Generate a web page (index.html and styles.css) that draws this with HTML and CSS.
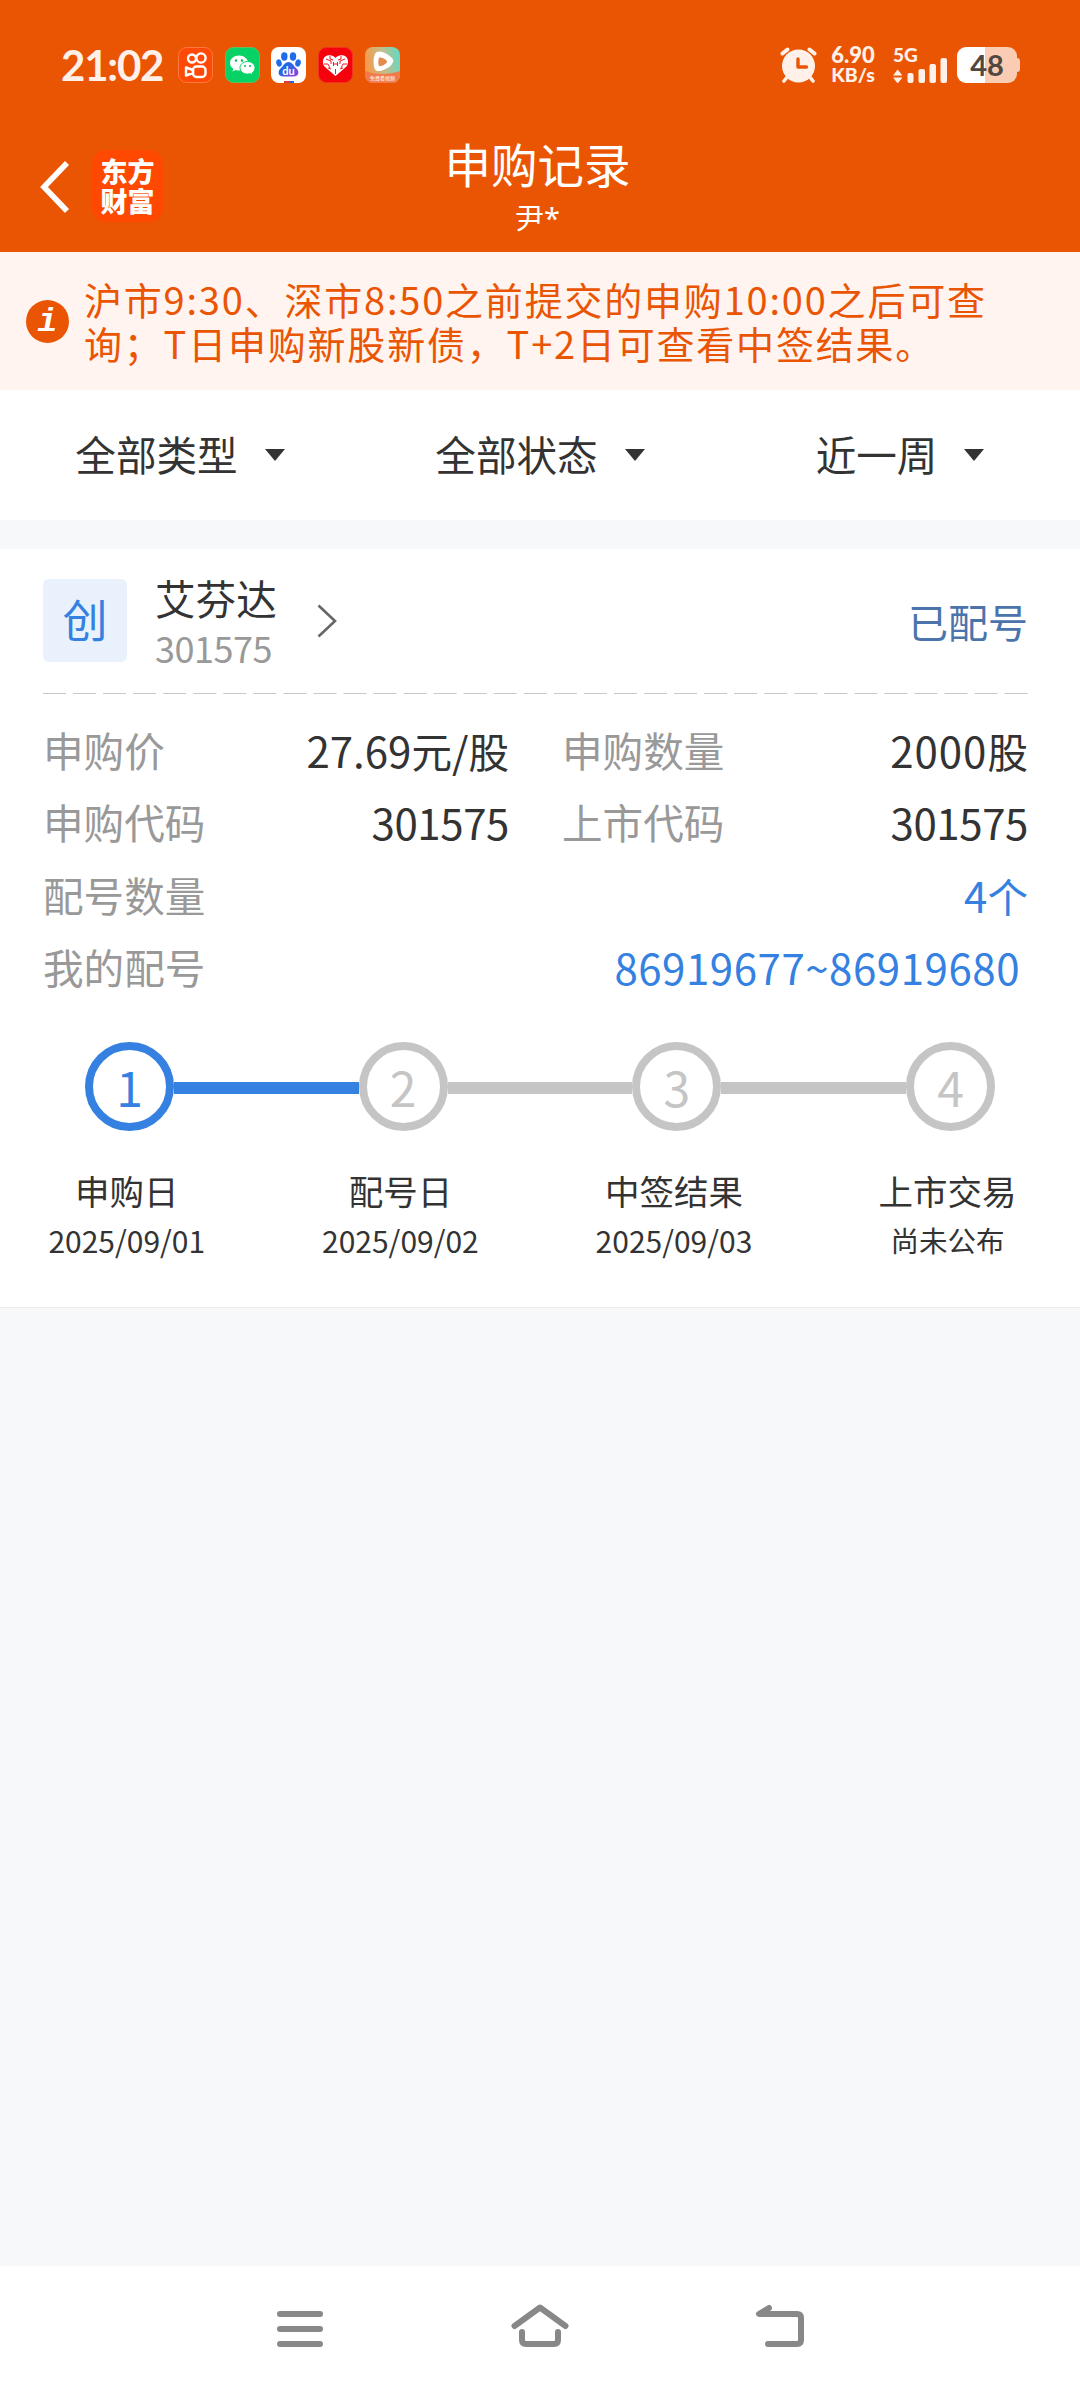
FILE: index.html
```html
<!DOCTYPE html>
<html lang="zh-CN">
<head>
    <meta charset="UTF-8">
    <meta name="viewport" content="width=device-width, initial-scale=1.0">
    <title>申购记录</title>
    <link rel="stylesheet" href="styles.css">
</head>
<body>
    <header class="header">
        <div class="status-bar">
            <span class="time">21:02</span>
            <div class="app-icons">
                <svg class="app-icon" viewBox="0 0 35 36">
                    <rect x=".5" y=".5" width="34" height="35" rx="8" fill="#ff4906" stroke="#ff7a3d"/>
                    <g fill="none" stroke="#fff" stroke-width="2.4">
                        <circle cx="14" cy="11.5" r="4"/>
                        <circle cx="23" cy="11" r="4.6"/>
                        <rect x="15" y="19.5" width="12.5" height="10.5" rx="3.5"/>
                        <path d="M15 23l-7-2.500v8l7-2.500z" stroke-linejoin="round"/>
                    </g>
                </svg>
                <svg class="app-icon" viewBox="0 0 35 36">
                    <rect x=".5" y=".5" width="34" height="35" rx="8" fill="#07d265" stroke="#5fc05c"/>
                    <path d="M14 8.500c-5 0-9 3.300-9 7.500 0 2.400 1.300 4.500 3.300 5.800l-.8 2.700 3.100-1.600c1 .4 2.200.6 3.400.6 5 0 9-3.300 9-7.500s-4-7.500-9-7.500z" fill="#fff"/>
                    <path d="M22.500 14.500c-4.200 0-7.500 2.800-7.500 6.300s3.300 6.300 7.500 6.300c1 0 2-.2 2.800-.5l2.700 1.500-.7-2.400c1.700-1.100 2.700-2.900 2.700-4.900 0-3.500-3.300-6.300-7.500-6.300z" fill="#fff" stroke="#07d265"/>
                    <g fill="#07b85a">
                        <circle cx="11" cy="13.500" r="1.200"/>
                        <circle cx="17" cy="13.500" r="1.200"/>
                        <circle cx="20" cy="19" r="1"/>
                        <circle cx="25" cy="19" r="1"/>
                    </g>
                </svg>
                <svg class="app-icon" viewBox="0 0 35 36">
                    <rect width="35" height="36" rx="8" fill="#fff"/>
                    <defs>
                        <linearGradient id="paw" x1="0" y1="0" x2="1" y2="1">
                            <stop offset=".4" stop-color="#2468e8"/>
                            <stop offset="1" stop-color="#a33be0"/>
                        </linearGradient>
                    </defs>
                    <g fill="#1f6cea">
                        <ellipse cx="13.300" cy="9.500" rx="3.200" ry="4.200"/>
                        <ellipse cx="22" cy="9.500" rx="3.200" ry="4.200"/>
                        <ellipse cx="8" cy="16" rx="2.700" ry="3.700" transform="rotate(-15 8 16)"/>
                        <ellipse cx="27" cy="16" rx="2.700" ry="3.700" transform="rotate(15 27 16)"/>
                    </g>
                    <path d="M17.500 15c-4 0-5 4-8 6.500-3.500 3.500-2 8 3 8h10c5 0 6.500-4.500 3-8-3-2.500-4-6.500-8-6.500z" fill="url(#paw)"/>
                    <text class="paw-text" x="17.500" y="28" text-anchor="middle">du</text>
                    <path d="M13 34h5v2h-5z" fill="#e23b3b"/>
                    <path d="M18 34h5v2h-5z" fill="#2468e8"/>
                </svg>
                <svg class="app-icon" viewBox="0 0 35 36">
                    <rect x=".5" y=".5" width="34" height="35" rx="8" fill="#f5000c" stroke="#f43022"/>
                    <path d="M17.500 29L6.500 19.500c-3-4-1.500-10 3-11 3-.8 6 0 8 2.500 2-2.500 5-3.300 8-2.500 4.500 1 6 7 3 11z" fill="#fff"/>
                    <path d="M8 12l5 2v3M12 9v3l3 1M27 12l-5 2v3M23 9v3l-3 1M6 17h4l2 4M29 17h-4l-2 4M15.500 17h4M15.500 15v4M19.500 15v4M17.500 22v5M10 21l3 1M25 21l-3 1" fill="none" stroke="#f5000c" stroke-width=".9"/>
                </svg>
                <svg class="app-icon" viewBox="0 0 35 36">
                    <defs>
                        <linearGradient id="video" x1="0" y1=".3" x2="1" y2=".1">
                            <stop offset="0" stop-color="#f79a4c"/>
                            <stop offset=".5" stop-color="#c2bd8d"/>
                            <stop offset="1" stop-color="#5bdcc8"/>
                        </linearGradient>
                    </defs>
                    <rect width="35" height="36" rx="8" fill="url(#video)"/>
                    <path d="M0 24c10 4 24 4 35 0v4a8 8 0 0 1-8 8H8a8 8 0 0 1-8-8z" fill="#f27a4a"/>
                    <path d="M10 7c2-4 7-2.500 10-1s7 4.500 8 6.500-1 5.500-4 7.500-10 5.500-13 3.500-3-13-1-16.500z" fill="#fff"/>
                    <path d="M14 11c1-1.500 7.500 1.500 8 3.500s-6.500 5.500-7.800 4.500-1-6.500-.2-8z" fill="#e38b4e"/>
                    <text class="video-text" x="17.500" y="33" text-anchor="middle">免费看视频</text>
                </svg>
            </div>
            <div class="status-right">
                <svg class="alarm" viewBox="0 0 37 36">
                    <g stroke="#fff1ea" stroke-linecap="round">
                        <path d="M2.500 6.500l5-4M34.500 6.500l-5-4" stroke-width="4"/>
                        <path d="M8 29l-4 5M29 29l4 5" stroke-width="3.600"/>
                    </g>
                    <circle cx="18.500" cy="19" r="16.500" fill="#fff1ea"/>
                    <path d="M18 12v8h8.500" fill="none" stroke="#ea5504" stroke-width="3.400" stroke-linecap="round" stroke-linejoin="round"/>
                </svg>
                <div class="speed">
                    <span class="rate">6.90</span>
                    <span>KB/s</span>
                </div>
                <div class="signal">
                    <span class="network">5G</span>
                    <svg class="bars" viewBox="0 0 55 26">
                        <g fill="#fff1ea">
                            <path d="M0 18.500l4.700-6 4.700 6zM0 20.500l4.700 6 4.700-6z"/>
                            <rect x="14.500" y="16" width="6" height="10" rx="2"/>
                            <rect x="25.500" y="12" width="6.500" height="14" rx="2"/>
                            <rect x="36.500" y="7" width="6.500" height="19" rx="2"/>
                            <rect x="47.500" y="1" width="6.500" height="25" rx="2"/>
                        </g>
                    </svg>
                </div>
                <div class="battery">48</div>
            </div>
        </div>
        <div class="nav-bar">
            <svg class="back" viewBox="0 0 30 54">
                <path d="M27 3L4 27l23 24" fill="none" stroke="#fff" stroke-width="5.600"/>
            </svg>
            <div class="logo">东方<br>财富</div>
            <div class="heading">
                <h1 class="title">申购记录</h1>
                <p class="user">尹<span class="mask">*</span></p>
            </div>
        </div>
    </header>

    <section class="notice">
        <span class="info">i</span>
        <p class="notice-text">沪市9:30、深市8:50之前提交的申购10:00之后可查<br>询；T日申购新股新债，T+2日可查看中签结果。</p>
    </section>

    <nav class="filters">
        <div class="filter">全部类型<i class="caret"></i></div>
        <div class="filter">全部状态<i class="caret"></i></div>
        <div class="filter">近一周<i class="caret"></i></div>
    </nav>

    <main class="card">
        <div class="card-head">
            <span class="board">创</span>
            <div class="stock">
                <span class="stock-name">艾芬达</span>
                <span class="stock-code">301575</span>
            </div>
            <svg class="arrow" viewBox="0 0 20 34">
                <path d="M1.500 1.500L18 17 1.500 32.500" fill="none" stroke="#666" stroke-width="2.600"/>
            </svg>
            <span class="status">已配号</span>
        </div>
        <svg class="divider" viewBox="0 0 985 1">
            <path d="M0 .5h985" stroke="#c8c8c8" stroke-dasharray="23 7.050"/>
        </svg>
        <div class="details">
            <div class="item">
                <span class="label">申购价</span>
                <span class="value"><b>27.69</b>元<b>/</b>股</span>
            </div>
            <div class="item">
                <span class="label">申购数量</span>
                <span class="value"><b class="amount">2000</b>股</span>
            </div>
            <div class="item">
                <span class="label">申购代码</span>
                <span class="value"><b class="code">301575</b></span>
            </div>
            <div class="item">
                <span class="label">上市代码</span>
                <span class="value"><b class="code">301575</b></span>
            </div>
            <div class="item wide">
                <span class="label">配号数量</span>
                <span class="value blue"><b>4</b>个</span>
            </div>
            <div class="item wide">
                <span class="label">我的配号</span>
                <span class="value blue lots"><b>86919677~86919680</b></span>
            </div>
        </div>
        <div class="track">
            <span class="dot active">1</span>
            <span class="line active"></span>
            <span class="dot">2</span>
            <span class="line"></span>
            <span class="dot">3</span>
            <span class="line"></span>
            <span class="dot">4</span>
        </div>
        <div class="steps">
            <div class="step"><span class="step-name">申购日</span><span class="step-date">2025/09/01</span></div>
            <div class="step"><span class="step-name">配号日</span><span class="step-date">2025/09/02</span></div>
            <div class="step"><span class="step-name">中签结果</span><span class="step-date">2025/09/03</span></div>
            <div class="step"><span class="step-name">上市交易</span><span class="step-date pending">尚未公布</span></div>
        </div>
    </main>

    <footer class="system-nav">
        <svg class="sys-icon" viewBox="0 0 60 46">
            <path d="M10 11h40M10 26h40M10 41h40"/>
        </svg>
        <svg class="sys-icon" viewBox="0 0 60 46">
            <path d="M4.500 23L30 4.500l25.500 18.500M12 29v8q0 4 4 4h28q4 0 4-4v-8"/>
        </svg>
        <svg class="sys-icon" viewBox="0 0 60 46">
            <path d="M19 5L9 11h38q4 0 4 4v22q0 4-4 4H18"/>
        </svg>
    </footer>
</body>
</html>
```

FILE: styles.css
```css
:root {
    --primary-color: #ea5504;
    --blue: #3481e1;
    --text-color: #333333;
    --muted: #999999;
    --page-bg: #f7f8fa;
    --status-color: #fff1ea;
}

* {
    margin: 0;
    padding: 0;
    box-sizing: border-box;
}

body {
    display: flex;
    flex-direction: column;
    min-height: 100vh;
    font-family: "Noto Sans CJK SC", sans-serif;
    color: var(--text-color);
    background-color: var(--page-bg);
}

svg {
    display: block;
    flex-shrink: 0;
}

.header {
    height: 252px;
    background-color: var(--primary-color);
}

/* Status bar */
.status-bar {
    display: flex;
    align-items: center;
    height: 130px;
    padding: 0 60px 0 61px;
    font-family: Lato, sans-serif;
    font-weight: 700;
    color: var(--status-color);
}

.time {
    width: 117px;
    font-size: 42px;
    line-height: 50px;
    letter-spacing: -1.2px;
}

.app-icons {
    display: flex;
    gap: 11.7px;
}

.app-icon {
    width: 35px;
    height: 36px;
}

.paw-text {
    font: 700 11px Lato, sans-serif;
    fill: #fff;
}

.video-text {
    font: 400 5px "Noto Sans CJK SC", sans-serif;
    fill: #fff;
}

.status-right {
    display: flex;
    align-items: center;
    margin-left: auto;
}

.alarm {
    width: 37px;
    height: 36px;
}

.speed {
    display: flex;
    flex-direction: column;
    align-items: center;
    width: 44px;
    margin-left: 14px;
    font-size: 19.5px;
    font-weight: 900;
    line-height: 20px;
}

.rate {
    font-size: 22px;
}

.signal {
    width: 55px;
    height: 36px;
    margin-left: 18px;
}

.network {
    display: block;
    height: 10px;
    font-size: 19px;
    font-weight: 900;
    line-height: 15px;
}

.bars {
    width: 55px;
    height: 26px;
}

.battery {
    position: relative;
    width: 60px;
    height: 36px;
    margin: 0 3px 0 9px;
    border-radius: 9px;
    background: linear-gradient(90deg, #fff 28px, #f9ccb3 28px);
    font-size: 29px;
    line-height: 36px;
    text-align: center;
    color: #514640;
}

.battery::after {
    content: "";
    position: absolute;
    top: 11px;
    right: -3px;
    width: 3px;
    height: 14px;
    border-radius: 0 3px 3px 0;
    background-color: #f9ccb3;
}

/* Title bar */
.nav-bar {
    display: grid;
    grid-template-columns: 54px 71px 1fr 168px;
    align-items: start;
    height: 122px;
    padding-left: 38px;
}

.back {
    width: 30px;
    height: 54px;
    margin: 30px 0 0 2px;
}

.logo {
    height: 72px;
    margin-top: 20px;
    padding-top: 6px;
    border-radius: 14px;
    background-color: #ff4800;
    font-size: 27px;
    font-weight: 900;
    line-height: 30px;
    text-align: center;
    color: #fff;
}

.heading {
    text-align: center;
    color: #fff;
}

.title {
    margin-top: 3px;
    font-size: 46.5px;
    font-weight: 400;
    line-height: 60px;
}

.user {
    font-size: 29px;
    line-height: 47px;
}

.mask {
    font-family: "Noto Sans", sans-serif;
    line-height: 1;
}

/* Notice */
.notice {
    display: flex;
    align-items: center;
    height: 138px;
    padding-left: 26px;
    background-color: #fff4ef;
    color: var(--primary-color);
}

.info {
    width: 43px;
    height: 43px;
    border-radius: 50%;
    background-color: var(--primary-color);
    font-family: "Liberation Mono", monospace;
    font-size: 33px;
    font-style: italic;
    font-weight: 700;
    line-height: 46px;
    text-align: center;
    color: #fff;
}

.notice-text {
    margin-left: 15px;
    font-size: 38px;
    line-height: 44.5px;
    letter-spacing: 1.8px;
    white-space: nowrap;
}

/* Filters */
.filters {
    display: grid;
    grid-template-columns: repeat(3, 360px);
    height: 130px;
    padding-bottom: 3px;
    background-color: #fff;
}

.filter {
    display: flex;
    align-items: center;
    justify-content: center;
    font-size: 40.6px;
}

.caret {
    margin: 3px 0 0 27px;
    border-top: 12px solid var(--text-color);
    border-left: 10px solid transparent;
    border-right: 10px solid transparent;
}

/* Record card */
.card {
    height: 759px;
    margin-top: 29px;
    padding: 0 52px 0 43px;
    border-bottom: 1px solid #ececec;
    background-color: #fff;
}

.card-head {
    display: flex;
    height: 144px;
    padding-top: 30px;
}

.board {
    width: 84px;
    height: 83px;
    border-radius: 6px;
    background-color: #e9f2fc;
    font-size: 45px;
    line-height: 80px;
    text-align: center;
    color: var(--blue);
}

.stock {
    display: flex;
    flex-direction: column;
    width: 162px;
    margin-left: 28px;
}

.stock-name {
    font-size: 40.6px;
    line-height: 37px;
}

.stock-code {
    margin-top: 6px;
    font-size: 36px;
    line-height: 50px;
    letter-spacing: -0.5px;
    color: var(--muted);
}

.arrow {
    width: 20px;
    height: 34px;
    margin-top: 25px;
}

.status {
    margin-left: auto;
    font-size: 40px;
    line-height: 84px;
    color: #4a74ab;
}

.divider {
    width: 985px;
    height: 1px;
}

.details {
    display: grid;
    grid-template-columns: 466px 466px;
    column-gap: 53px;
    grid-auto-rows: 72.3px;
    margin-top: 20px;
}

.item {
    display: flex;
    justify-content: space-between;
    font-size: 40.6px;
    line-height: 72px;
}

.wide {
    grid-column: 1 / 3;
}

.label {
    color: var(--muted);
}

.value b {
    font-size: 42px;
    font-weight: 400;
}

.value .amount {
    letter-spacing: 1px;
}

.value .code {
    letter-spacing: -0.4px;
}

.blue {
    color: var(--blue);
}

.lots {
    padding-right: 8px;
    letter-spacing: 0.55px;
}

/* Progress */
.track {
    display: flex;
    align-items: center;
    width: 910px;
    height: 89px;
    margin: 39px 0 0 42px;
}

.dot {
    width: 89px;
    height: 89px;
    border: 8px solid #c5c5c5;
    border-radius: 50%;
    font-size: 48px;
    font-weight: 400;
    line-height: 73px;
    text-align: center;
    color: #c5c5c5;
}

.line {
    flex: 1;
    height: 12px;
    margin-top: 2px;
    background-color: #c5c5c5;
}

.dot.active {
    border-color: var(--blue);
    color: var(--blue);
}

.line.active {
    background-color: var(--blue);
}

.steps {
    display: grid;
    grid-template-columns: repeat(4, 273.6px);
    margin: 33px 0 0 -53px;
}

.step {
    display: flex;
    flex-direction: column;
    text-align: center;
}

.step-name {
    font-size: 34.5px;
    line-height: 52px;
}

.step-date {
    font-size: 30px;
    line-height: 48px;
}

.step-date.pending {
    font-size: 28.5px;
}

/* System navigation */
.system-nav {
    display: flex;
    justify-content: center;
    gap: 180px;
    height: 126px;
    margin-top: auto;
    padding-top: 37px;
    background-color: #fff;
}

.sys-icon {
    width: 60px;
    height: 46px;
    fill: none;
    stroke: #888888;
    stroke-width: 6;
    stroke-linecap: round;
    stroke-linejoin: round;
}
```
